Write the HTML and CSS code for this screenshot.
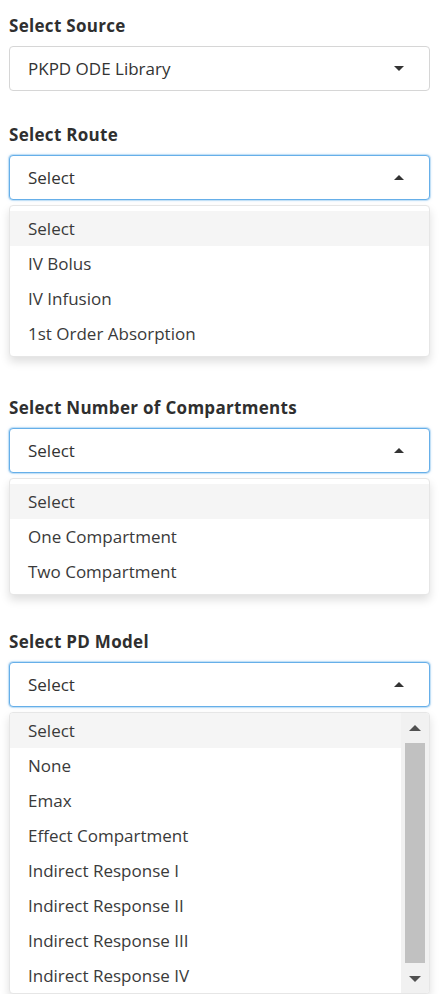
FILE: index.html
```html
<!DOCTYPE html>
<html>
<head>
<meta charset="utf-8">
<link rel="stylesheet" href="styles.css">
</head>
<body>
<div class="panel">
  <div class="field first">
    <div class="label">Select Source</div>
    <div class="select">
      <span class="value">PKPD ODE Library</span>
      <span class="caret down"></span>
    </div>
  </div>

  <div class="field gap-a">
    <div class="label">Select Route</div>
    <div class="select open">
      <span class="value">Select</span>
      <span class="caret up"></span>
    </div>
    <div class="dropdown">
      <div class="option active">Select</div>
      <div class="option">IV Bolus</div>
      <div class="option">IV Infusion</div>
      <div class="option">1st Order Absorption</div>
    </div>
  </div>

  <div class="field gap-b">
    <div class="label">Select Number of Compartments</div>
    <div class="select open">
      <span class="value">Select</span>
      <span class="caret up"></span>
    </div>
    <div class="dropdown">
      <div class="option active">Select</div>
      <div class="option">One Compartment</div>
      <div class="option">Two Compartment</div>
    </div>
  </div>

  <div class="field gap-c">
    <div class="label">Select PD Model</div>
    <div class="select open">
      <span class="value">Select</span>
      <span class="caret up"></span>
    </div>
    <div class="dropdown scroll">
      <div class="options">
        <div class="option active">Select</div>
        <div class="option">None</div>
        <div class="option">Emax</div>
        <div class="option">Effect Compartment</div>
        <div class="option">Indirect Response I</div>
        <div class="option">Indirect Response II</div>
        <div class="option">Indirect Response III</div>
        <div class="option">Indirect Response IV</div>
      </div>
      <div class="scrollbar">
        <span class="sb-arrow sb-up"></span>
        <span class="sb-thumb"></span>
        <span class="sb-arrow sb-down"></span>
      </div>
    </div>
  </div>
</div>
</body>
</html>
```

FILE: styles.css
```css
html, body {
  margin: 0;
  padding: 0;
  background: #ffffff;
}

body {
  font-family: "Open Sans", "Noto Sans", "Liberation Sans", sans-serif;
  font-size: 17px;
  color: #333333;
}

.panel {
  display: flex;
  flex-direction: column;
  width: 421px;
  margin-left: 9px;
}

.field.first { margin-top: 16px; }
.field.gap-a { margin-top: 34px; }
.field.gap-b { margin-top: 41px; }
.field.gap-c { margin-top: 37px; }

.label {
  font-weight: 700;
  line-height: 20px;
  margin-bottom: 10px;
  color: #2f2f2f;
  letter-spacing: 0.3px;
}

.select {
  box-sizing: border-box;
  height: 45px;
  border: 1px solid #d6d6d6;
  border-radius: 4px;
  display: flex;
  align-items: center;
  justify-content: space-between;
  padding: 0 25px 0 18px;
  background: #fff;
}

.select.open {
  border-color: #66afe9;
  box-shadow: 0 0 0 1px rgba(102, 175, 233, 0.25), 0 0 3px rgba(102, 175, 233, 0.55);
}

.value {
  line-height: 20px;
  color: #333;
}

.caret {
  width: 0;
  height: 0;
  border-left: 5.5px solid transparent;
  border-right: 5.5px solid transparent;
}
.caret.down { border-top: 5px solid #333; }
.caret.up { border-bottom: 5px solid #333; }

.dropdown {
  margin-top: 5px;
  border: 1px solid #e6e6e6;
  border-radius: 4px;
  background: #fff;
  box-shadow: 0 5px 10px rgba(0, 0, 0, 0.13);
  padding: 5px 0;
}

.option {
  height: 35px;
  display: flex;
  align-items: center;
  padding-left: 18px;
  color: #3a3a3a;
}

.option.active {
  background: #f5f5f5;
}

.dropdown.scroll {
  padding: 0;
  display: flex;
  overflow: hidden;
}

.options {
  flex: 1;
}

.scrollbar {
  width: 28px;
  background: #f1f1f1;
  display: flex;
  flex-direction: column;
  align-items: center;
}

.sb-arrow {
  width: 0;
  height: 0;
  border-left: 6px solid transparent;
  border-right: 6px solid transparent;
}
.sb-up {
  margin-top: 12px;
  border-bottom: 6px solid #505050;
}
.sb-down {
  margin-top: 13px;
  border-top: 6px solid #505050;
}

.sb-thumb {
  width: 20px;
  height: 220px;
  margin-top: 12px;
  background: #c1c1c1;
}
```
